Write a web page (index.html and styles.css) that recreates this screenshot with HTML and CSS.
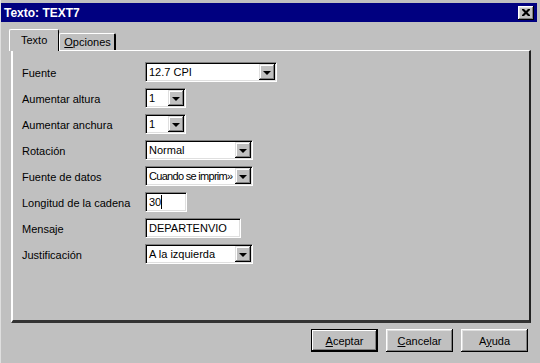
FILE: index.html
```html
<!DOCTYPE html>
<html lang="es">
<head>
    <meta charset="UTF-8">
    <title>Texto: TEXT7</title>
    <link rel="stylesheet" href="styles.css">
</head>
<body>
    <div class="dialog">
        <div class="titlebar">
            <span class="title">Texto: TEXT7</span>
            <div class="close-btn">
                <svg width="8" height="7" viewBox="0 0 8 7">
                    <path d="M0 0h2l2 2 2-2h2v1l-2.5 2.5 2.5 2.5v1h-2l-2-2-2 2h-2v-1l2.5-2.5-2.5-2.5z" fill="#000"/>
                </svg>
            </div>
        </div>

        <div class="content">
            <div class="tabs">
                <div class="tab active">Texto</div>
                <div class="tab"><u>O</u>pciones</div>
            </div>
            <div class="panel">
                <div class="form">
                    <label>Fuente</label>
                    <div class="combo w-wide"><span class="val">12.7 CPI</span><span class="drop"></span></div>

                    <label>Aumentar altura</label>
                    <div class="combo w-small"><span class="val">1</span><span class="drop"></span></div>

                    <label>Aumentar anchura</label>
                    <div class="combo w-small"><span class="val">1</span><span class="drop"></span></div>

                    <label>Rotación</label>
                    <div class="combo w-mid"><span class="val">Normal</span><span class="drop"></span></div>

                    <label>Fuente de datos</label>
                    <div class="combo w-mid"><span class="val tight">Cuando se imprim»</span><span class="drop"></span></div>

                    <label>Longitud de la cadena</label>
                    <div class="field w-num"><span class="val">30</span><span class="caret"></span></div>

                    <label>Mensaje</label>
                    <div class="field w-msg"><span class="val">DEPARTENVIO</span></div>

                    <label>Justificación</label>
                    <div class="combo w-mid"><span class="val">A la izquierda</span><span class="drop"></span></div>
                </div>
            </div>
        </div>

        <div class="buttons">
            <button class="btn default"><u>A</u>ceptar</button>
            <button class="btn"><u>C</u>ancelar</button>
            <button class="btn">A<u>y</u>uda</button>
        </div>
    </div>
</body>
</html>
```

FILE: styles.css
```css
*{
    box-sizing: border-box;
}
body{
    margin: 0;
    background-color: #c0c0c0;
    font-family: "Liberation Sans", Arial, sans-serif;
    font-size: 11px;
    color: #000;
}
.dialog{
    width: 540px;
    height: 363px;
    padding-top: 3px;
    border-left: 1px solid #dfdfdf;
}
.titlebar{
    height: 19px;
    margin-right: 3px;
    background-color: #000080;
    display: flex;
    justify-content: space-between;
    align-items: center;
    padding: 0 3px 0 3px;
}
.title{
    color: #fff;
    font-weight: 700;
    font-size: 12px;
}
.close-btn{
    width: 16px;
    height: 14px;
    background-color: #c0c0c0;
    display: flex;
    justify-content: center;
    align-items: center;
    box-shadow: inset -1px -1px #000, inset 1px 1px #fff, inset -2px -2px #808080, inset 2px 2px #dfdfdf;
}
.content{
    padding: 7px 9px 0 8px;
}
.tabs{
    display: flex;
    align-items: flex-end;
    height: 21px;
    position: relative;
    z-index: 1;
}
.tab{
    height: 17px;
    padding: 2px 3px 0 4px;
    border-top: 1px solid #fff;
    border-left: 1px solid #fff;
    border-right: 2px solid #000;
    border-radius: 2px 2px 0 0;
    background-color: #c0c0c0;
}
.tab.active{
    height: 22px;
    margin-bottom: -1px;
    padding: 4px 11px 0 11px;
    border-right: 1px solid #000;
}
.panel{
    height: 273px;
    margin-left: 2px;
    border-top: 1px solid #fff;
    border-left: 2px solid #fff;
    border-right: 2px solid #222;
    border-bottom: 3px solid #333;
    padding: 11px 0 0 9px;
}
.form{
    display: grid;
    grid-template-columns: 123px auto;
    grid-auto-rows: 20px;
    row-gap: 6px;
    align-items: center;
    justify-items: start;
}
.form label{
    padding-top: 1px;
}
.combo, .field{
    height: 20px;
    display: flex;
    align-items: center;
    background-color: #fff;
    border: 1px solid;
    border-color: #808080 #fff #fff #808080;
    box-shadow: inset 1px 1px #000, inset -1px -1px #dfdfdf;
    padding: 1px 1px 1px 2px;
    white-space: nowrap;
    overflow: hidden;
}
.val{
    flex: 1;
    overflow: hidden;
    line-height: 16px;
    padding-left: 1px;
}
.val.tight{
    letter-spacing: -0.7px;
}
.field .val{
    flex: none;
}
.caret{
    width: 1px;
    height: 14px;
    background-color: #000;
}
.drop{
    flex: none;
    width: 16px;
    height: 16px;
    background-color: #c0c0c0;
    box-shadow: inset -1px -1px #000, inset 1px 1px #dfdfdf, inset -2px -2px #808080, inset 2px 2px #fff;
    display: flex;
    justify-content: center;
    align-items: center;
}
.drop::after{
    content: "";
    border-left: 4px solid transparent;
    border-right: 4px solid transparent;
    border-top: 4px solid #000;
    margin-top: 1px;
}
.w-wide{ width: 132px; }
.w-small{ width: 41px; }
.w-mid{ width: 108px; }
.w-num{ width: 42px; }
.w-msg{ width: 96px; }
.buttons{
    display: flex;
    justify-content: flex-end;
    gap: 8px;
    padding: 6px 12px 0 0;
}
.btn{
    width: 67px;
    height: 23px;
    font-family: inherit;
    font-size: 11px;
    color: #000;
    background-color: #c0c0c0;
    border: none;
    padding: 0;
    box-shadow: inset -1px -1px #000, inset 1px 1px #fff, inset -2px -2px #808080, inset 2px 2px #dfdfdf;
}
.btn.default{
    border: 1px solid #000;
    box-shadow: inset -1px -1px #000, inset 1px 1px #fff, inset -2px -2px #808080;
}
```
